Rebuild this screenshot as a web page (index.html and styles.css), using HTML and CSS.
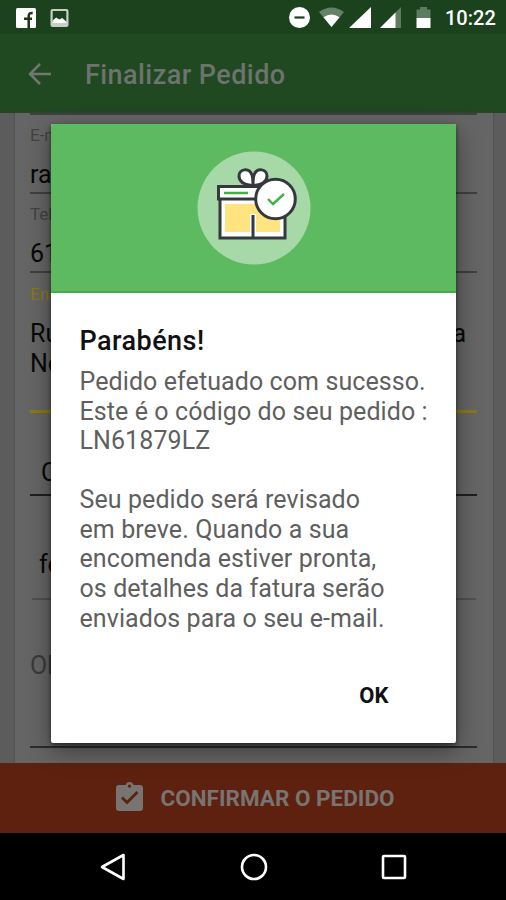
FILE: index.html
```html
<!DOCTYPE html>
<html lang="pt-BR">
<head>
<meta charset="utf-8">
<meta name="viewport" content="width=device-width">
<title>Finalizar Pedido</title>
<link rel="stylesheet" href="styles.css">
</head>
<body>
<div class="screen">
  <header class="status">
    <svg class="notices" viewBox="0 0 60 24" aria-hidden="true">
      <rect x="0" y="0" width="20" height="20" rx="1.5" fill="#fff"/>
      <path d="M12.7 20v-7.500M8 10.700h8M12.700 13V8q0-3.300 4-3" fill="none" stroke="#173719" stroke-width="2.500"/>
      <path fill-rule="evenodd" fill="#c6cec6" d="M36.500 1h14q2 0 2 2v14q0 2-2 2h-14q-2 0-2-2V3q0-2 2-2zM36.700 3v11h13.600V3z"/>
      <path d="M36.700 15v-2.500l3.500-3 3 2 3-1.500 4.100 3.500V15z" fill="#fff"/>
    </svg>
    <svg class="signals" viewBox="0 0 146 24" aria-hidden="true">
      <circle cx="10.500" cy="10.500" r="10.500" fill="#fff"/><path d="M5.500 10.500h10" stroke="#1b421d" stroke-width="2.200"/>
      <path d="M30 5q12.500-9 25 0L42.500 20z" fill="#648268"/><path d="M34.500 10.300q8-5.500 16 0L42.500 20z" fill="#fff"/>
      <path d="M60 21L82 0v21z" fill="#fff"/>
      <path d="M91 21L112 0v21z" fill="#5d7c60"/><path d="M91 21L106.500 5.500V21z" fill="#fff"/>
      <path d="M127.500 2.500h3.500V0h7v2.500h3.500v9h-14z" fill="#5d7c60"/><path d="M127.500 11h14v10h-14z" fill="#fff"/>
    </svg>
    <time class="clock">10:22</time>
  </header>
  <div class="appbar">
    <svg class="back" viewBox="0 0 24 22" aria-hidden="true"><path d="M23 11H2M12 1L2 11l10 10" fill="none" stroke="#717771" stroke-width="2.500"/></svg>
    <h1 class="title">Finalizar Pedido</h1>
  </div>
  <main class="page">
    <form class="card">
      <div class="field first"></div>
      <div class="field short"><span class="label">E-mail</span><span class="value">ra</span></div>
      <div class="field short"><span class="label">Telefone</span><span class="value">61</span></div>
      <div class="field address"><span class="label active">Endereço</span><div class="value split"><span>Ru<br>No</span><span>a</span></div></div>
      <div class="field city"><span class="value">C</span></div>
      <div class="field kind"><span class="value">fe</span></div>
      <div class="field notes"><span class="value">Ob</span></div>
    </form>
  </main>
  <div class="confirm">
    <svg class="clip" viewBox="0 0 27 29" aria-hidden="true">
      <path fill="#777471" fill-rule="evenodd" d="M3 3h6.500Q10.500 0 13.500 0t4 3H24q3 0 3 3v20q0 3-3 3H3q-3 0-3-3V6q0-3 3-3zm10.500-.5a1.600 1.600 0 1 0 0 3.200 1.600 1.600 0 0 0 0-3.200z"/>
      <path d="M6 15.500l5 5L21.500 10" fill="none" stroke="#5e210f" stroke-width="2.800"/>
    </svg>
    <span>CONFIRMAR O PEDIDO</span>
  </div>
  <nav class="nav">
    <svg viewBox="0 0 28 28"><path d="M3 14L24.500 2v24z"/></svg>
    <svg viewBox="0 0 28 28"><circle cx="14" cy="14" r="12"/></svg>
    <svg viewBox="0 0 28 28"><rect x="3" y="3" width="22" height="22" rx="1"/></svg>
  </nav>
  <section class="dialog" role="dialog">
    <div class="hero">
      <svg class="gift" viewBox="0 0 114 114" aria-hidden="true">
        <circle cx="57" cy="57" r="56.500" fill="#a6d9a7"/>
        <g stroke="#35383d" stroke-width="3">
          <path d="M56 34c-9 1-14-4-14-9 0-7 10-9 13-1q1 3 1 10zM56 34c9 1 14-4 14-9 0-7-10-9-13-1q-1 3-1 10z" fill="#fff"/>
          <rect x="23" y="46" width="65" height="41" fill="#fff"/>
          <path d="M28 53h25v28H28zM59 53h24v28H59z" fill="#ffe47f" stroke="none"/>
          <path d="M53 53h6v10h-6z" fill="#ffe47f" stroke="none"/>
          <path d="M56 64v22" fill="none"/>
          <path d="M21.500 35.500H64V48H21.500z" fill="#fff"/>
          <circle cx="78.500" cy="48" r="19.800" fill="#fff"/>
        </g>
        <path d="M27 42h24M71 48l5 5 11-10" fill="none" stroke="#42af48" stroke-width="2.400"/>
      </svg>
    </div>
    <div class="body">
      <h2>Parabéns!</h2>
      <p>Pedido efetuado com sucesso.<br>Este é o código do seu pedido :<br>LN61879LZ</p>
      <p>Seu pedido será revisado<br>em breve. Quando a sua<br>encomenda estiver pronta,<br>os detalhes da fatura serão<br>enviados para o seu e-mail.</p>
      <button class="ok" type="button">OK</button>
    </div>
  </section>
</div>
</body>
</html>
```

FILE: styles.css
```css
* { box-sizing: border-box; }
body { margin: 0; font-family: Roboto, sans-serif; background: #000; }
.screen { position: relative; width: 506px; height: 900px; overflow: hidden; display: flex; flex-direction: column; }
.status { height: 34px; flex: none; background: #1b421d; display: flex; align-items: flex-start; padding: 7px 11px 0 16px; color: #fff; }
.notices { width: 60px; height: 24px; margin-top: 1px; }
.signals { width: 146px; height: 24px; margin-left: auto; }
.clock { width: 50px; margin-left: 10px; font-size: 20px; line-height: 23px; font-weight: 500; white-space: nowrap; }
.appbar { height: 79px; flex: none; display: flex; align-items: center; background: #204821; padding: 3px 28px 0; gap: 33px; }
.back { width: 24px; height: 22px; margin-top: -3px; }
.title { margin: 0; font-size: 27px; letter-spacing: .43px; line-height: 32px; font-weight: 500; color: #6d736d; }
.page { flex: none; height: 650px; background: #5c5c5c; padding: 0 13px 0 15px; }
.card { height: 650px; background: #656565; padding: 0 16px 0 15px; box-shadow: 0 0 2px #444; }
.field { border-bottom: 2px solid #404040; display: flex; flex-direction: column; color: #080808; }
.first { height: 2px; }
.label { font-size: 17px; line-height: 20px; color: #424242; }
.value { font-size: 25px; line-height: 29.5px; }
.short { height: 79px; padding-top: 10px; gap: 15px; }
.address { height: 140px; padding-top: 11px; gap: 15px; border-bottom: 3px solid #8b7914; }
.active { color: #8b7914; }
.split { display: flex; justify-content: space-between; padding-right: 11px; }
.city { height: 83px; padding: 45px 0 0 11px; border-color: #1f1f1f; }
.kind { height: 104px; padding: 54px 0 0 7px; margin: 0 1px 0 2px; border-color: #505050; }
.notes { height: 148px; padding-top: 51px; border-color: #2b2b2b; color: #3a3a3a; }
.confirm { height: 70px; flex: none; background: #5e210f; color: #777471; display: flex; align-items: center; justify-content: center; gap: 17px; font-size: 22.5px; font-weight: 700; padding-left: 5px; }
.clip { width: 27px; height: 29px; margin-top: -3px; }
.nav { height: 67px; background: #000; display: flex; justify-content: space-between; align-items: center; padding: 0 98px 0 99px; }
.nav svg { width: 28px; height: 28px; fill: none; stroke: #fff; stroke-width: 2.6; stroke-linejoin: round; }
.dialog { position: absolute; left: 51px; top: 124px; width: 405px; height: 619px; background: #fff; border-radius: 2px; box-shadow: 0 8px 24px rgba(0,0,0,.4), 0 2px 4px rgba(0,0,0,.5); }
.hero { height: 169px; background: #5eba60; border-bottom: 2px solid #43af49; display: flex; justify-content: center; padding-top: 27px; border-radius: 2px 2px 0 0; }
.gift { width: 114px; height: 114px; }
.body { padding: 32px 28.5px 0; display: flex; flex-direction: column; }
h2 { margin: 0 0 10px; font-size: 27px; letter-spacing: .45px; line-height: 32px; font-weight: 500; color: #111; }
p { margin: 0 0 29.5px; font-size: 25px; letter-spacing: .09px; line-height: 29.6px; color: #5f5f5f; white-space: nowrap; }
.ok { align-self: flex-end; margin: 20px 39px 0 0; padding: 0; border: 0; background: none; font: 700 22px/26px Roboto, sans-serif; color: #111; }
```
